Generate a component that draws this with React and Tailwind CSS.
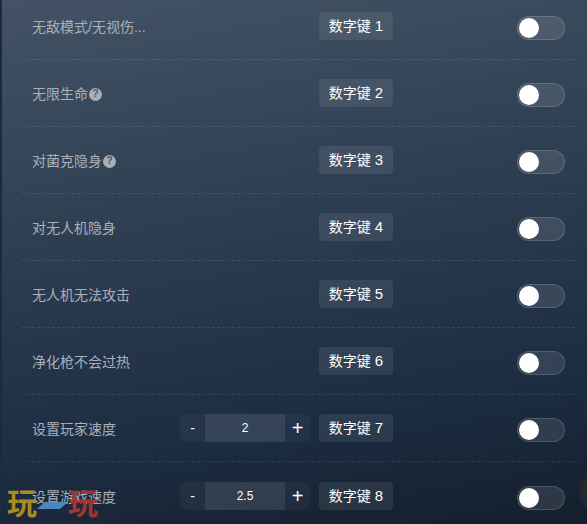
const rows = [
  { label: '无敌模式/无视伤...', key: '数字键', num: '1' },
  { label: '无限生命', key: '数字键', num: '2', help: true },
  { label: '对菌克隐身', key: '数字键', num: '3', help: true },
  { label: '对无人机隐身', key: '数字键', num: '4' },
  { label: '无人机无法攻击', key: '数字键', num: '5' },
  { label: '净化枪不会过热', key: '数字键', num: '6' },
  { label: '设置玩家速度', key: '数字键', num: '7', value: '2' },
  { label: '设置游戏速度', key: '数字键', num: '8', value: '2.5' },
]

function Help() {
  return (
    <span className="ml-px flex h-[13px] w-[13px] items-center justify-center rounded-full bg-[#a9afb8] text-[10px] leading-none font-bold text-[#4a5869]">?</span>
  )
}

function Stepper({ value }) {
  return (
    <div className="mr-[9px] flex h-7 w-[130px] overflow-hidden rounded-md bg-white/[0.04] text-white">
      <button className="w-[25px] text-sm">-</button>
      <div className="flex flex-1 items-center justify-center bg-white/[0.08] text-xs font-medium">{value}</div>
      <button className="w-[25px] text-xl leading-none">+</button>
    </div>
  )
}

function Toggle() {
  return (
    <div className="flex h-6 w-12 items-center rounded-full border border-white/15 bg-white/10 pl-px">
      <div className="h-5 w-5 rounded-full bg-white" />
    </div>
  )
}

function Row({ label, keyName, num, help, value, last }) {
  return (
    <div className={`flex h-[67px] items-center pr-[10px] pl-[10px] ${last ? '' : 'border-b border-dashed border-white/10'}`}>
      <div className="flex flex-1 items-center pt-0.5 text-sm text-[#a9b0b8]">
        <span>{label}</span>
        {help && <Help />}
      </div>
      {value && <Stepper value={value} />}
      <div className="flex h-7 w-[74px] items-center justify-center gap-1 rounded bg-white/[0.08] text-sm text-white">
        <span>{keyName}</span>
        <span className="text-[15px]">{num}</span>
      </div>
      <div className="ml-[124px] pt-1">
        <Toggle />
      </div>
    </div>
  )
}

export default function App() {
  return (
    <div className="relative h-[524px] w-[587px] overflow-hidden bg-[linear-gradient(170deg,#435365_0%,#1b2b40_78%,#151f2c_100%)] font-['Liberation_Sans','Noto_Sans_CJK_SC',sans-serif]">
      <div className="absolute top-0 bottom-0 left-0 w-0.5 bg-[#1b2a3c]" />
      <div className="-mt-[7px] ml-[22px] w-[553px]">
        {rows.map((r, i) => (
          <Row key={r.num} label={r.label} keyName={r.key} num={r.num} help={r.help} value={r.value} last={i === rows.length - 1} />
        ))}
      </div>
      <div className="absolute top-[472px] left-[579px] h-10 w-10 rounded-full bg-[#2a2a2e]/70" />
      <div className="absolute top-[489px] left-[7px] flex items-center text-[30px] leading-none font-bold">
        <span className="text-[#a98a25]">玩</span>
        <svg width="31" height="8" viewBox="0 0 31 8" className="mt-1">
          <path d="M8 0H31L23 7H0Z" fill="#4d86b8" />
        </svg>
        <span className="text-[#9f3636]">玩</span>
      </div>
    </div>
  )
}
